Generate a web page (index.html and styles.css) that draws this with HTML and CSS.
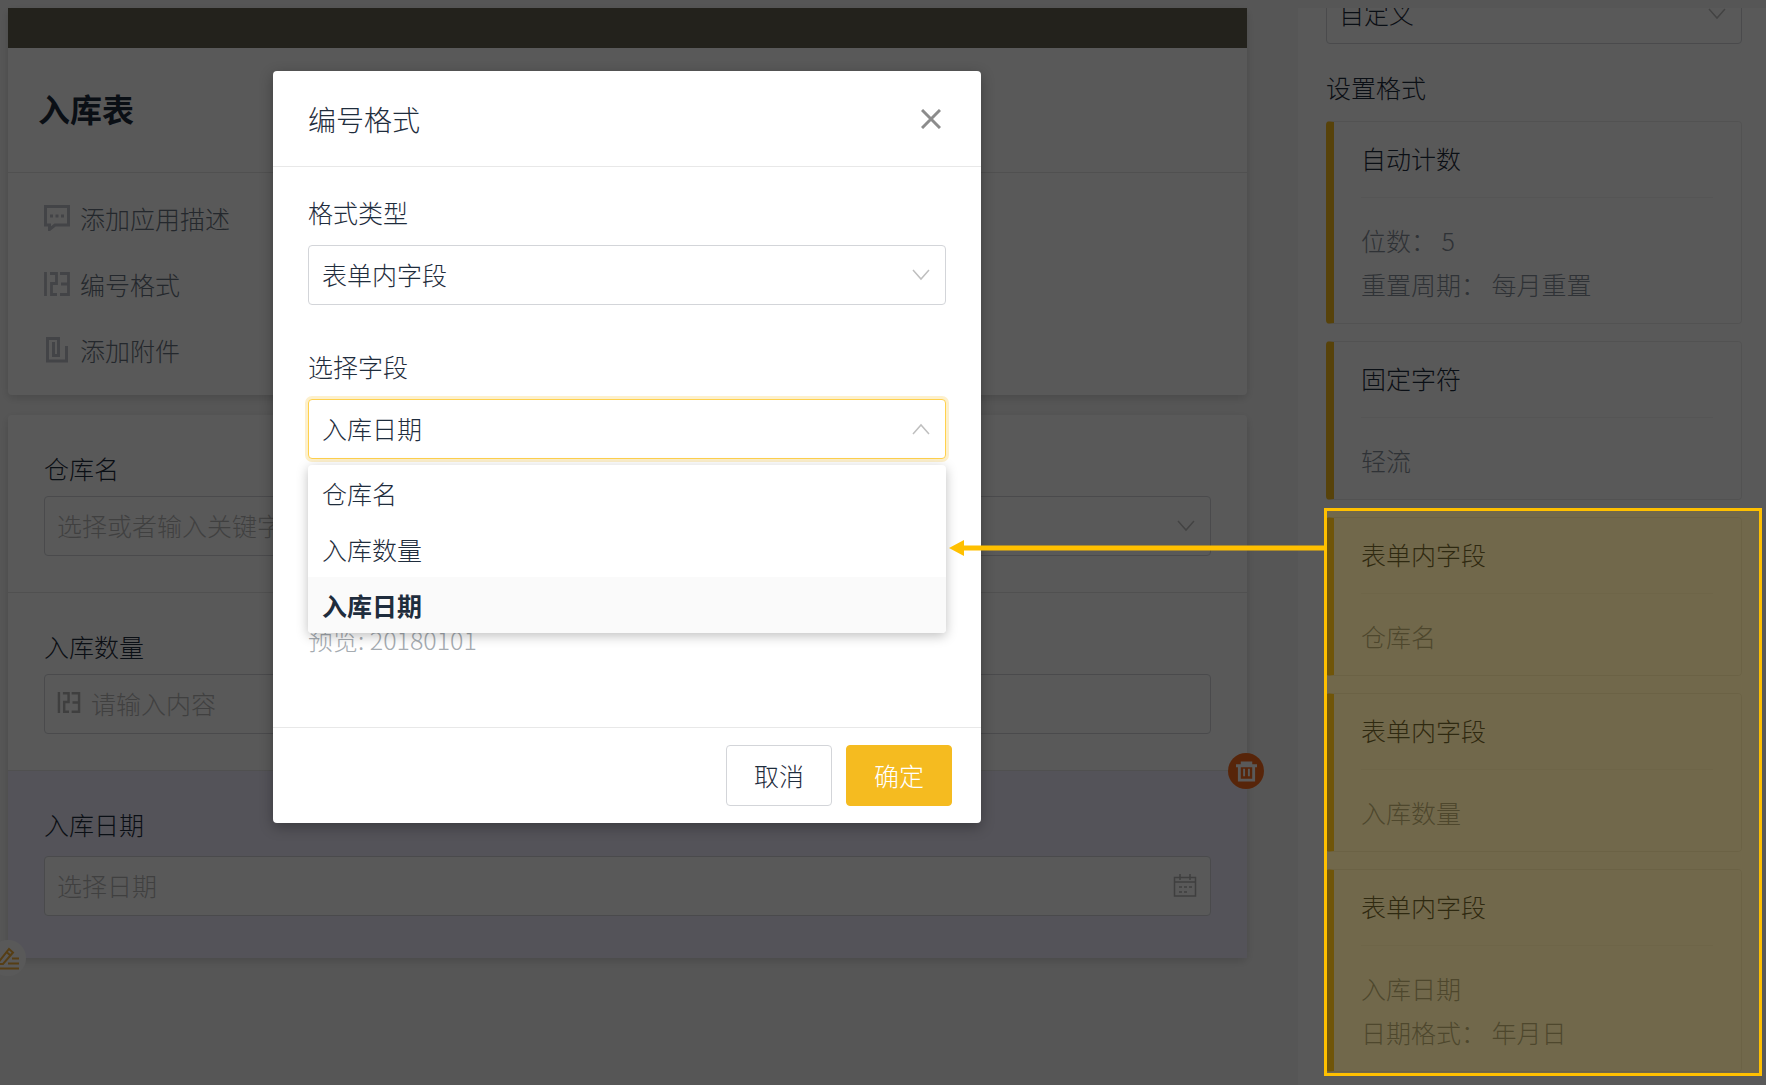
FILE: index.html
```html
<!DOCTYPE html>
<html lang="zh-CN">
<head>
<meta charset="utf-8">
<meta name="viewport" content="width=device-width, initial-scale=1">
<title>入库表 - 编号格式</title>
<link rel="stylesheet" href="styles.css">
</head>
<body>
<svg class="sprite" aria-hidden="true">
  <symbol id="digits" viewBox="0 0 26 24">
    <path d="M1.500 0v24M6 1.500h6.500v10H7.500v11H13M16 1.500h8.500v21H16M17 12h7.500" fill="none" stroke="currentColor" stroke-width="2.800"/>
  </symbol>
  <symbol id="chevron" viewBox="0 0 18 12">
    <path d="M1 1l8 9 8-9" fill="none" stroke="currentColor" stroke-width="1.500"/>
  </symbol>
</svg>

<div class="workspace">
  <main class="canvas">
    <section class="card intro">
      <div class="banner"></div>
      <h1 class="form-title">入库表</h1>
      <ul class="tools">
        <li class="tool">
          <svg class="tool-icon" viewBox="0 0 26 26"><path d="M1.500 1.500h23v18.500H11l-5.500 4.500V20h-4z" fill="none" stroke="currentColor" stroke-width="3"/><path d="M6 11h3M11.500 11h3M17 11h3" stroke="currentColor" stroke-width="3"/></svg>
          <span>添加应用描述</span>
        </li>
        <li class="tool">
          <svg class="tool-icon"><use href="#digits"/></svg>
          <span>编号格式</span>
        </li>
        <li class="tool">
          <svg class="tool-icon" viewBox="0 0 26 26"><path d="M9.500 5v13.500h5V1.500h-11v22.500h19V9" fill="none" stroke="currentColor" stroke-width="3"/></svg>
          <span>添加附件</span>
        </li>
      </ul>
    </section>

    <section class="card fields">
      <div class="field">
        <label class="field-label" for="warehouse">仓库名</label>
        <div class="control">
          <input class="box" id="warehouse" type="text" placeholder="选择或者输入关键字搜索">
          <svg class="chevron"><use href="#chevron"/></svg>
        </div>
      </div>
      <div class="field">
        <label class="field-label" for="amount">入库数量</label>
        <div class="control">
          <svg class="lead-icon"><use href="#digits"/></svg>
          <input class="box with-lead" id="amount" type="text" placeholder="请输入内容">
        </div>
      </div>
      <div class="field active">
        <label class="field-label" for="date">入库日期</label>
        <div class="control">
          <input class="box" id="date" type="text" placeholder="选择日期">
          <svg class="calendar" viewBox="0 0 24 24"><path d="M1.500 3.500h21v18.500h-21zM1.500 8h21M7 0v6M17 0v6" fill="none" stroke="currentColor" stroke-width="1.500"/><path d="M6 13h3M11 13h3M16 13h3M6 18h3M11 18h3" stroke="currentColor" stroke-width="1.500"/></svg>
        </div>
        <button class="round remove" type="button" aria-label="删除">
          <svg viewBox="0 0 22 22"><path d="M0 5h22M6.500 5V2h9v3M3.500 5v15h15V5" fill="none" stroke="currentColor" stroke-width="3"/><path d="M8.500 8v8M13.500 8v8" stroke="currentColor" stroke-width="2"/></svg>
        </button>
        <button class="round edit" type="button" aria-label="编辑">
          <svg viewBox="0 0 24 24"><path d="M2 17L13 3l4 3.500L7 18H2zM10.500 6l4 3.500M16 12.500h7M12 17.500h11M1 22.500h22" fill="none" stroke="currentColor" stroke-width="2"/></svg>
        </button>
      </div>
    </section>
  </main>

  <aside class="sidebar">
    <div class="control scrolled">
      <select class="box" aria-label="编号规则"><option>自定义</option></select>
      <svg class="chevron"><use href="#chevron"/></svg>
    </div>
    <h2 class="side-title">设置格式</h2>
    <div class="rules">
      <article class="rule">
        <h3 class="rule-name">自动计数</h3>
        <p class="rule-body">位数： 5<br>重置周期： 每月重置</p>
      </article>
      <article class="rule">
        <h3 class="rule-name">固定字符</h3>
        <p class="rule-body">轻流</p>
      </article>
      <article class="rule">
        <h3 class="rule-name">表单内字段</h3>
        <p class="rule-body">仓库名</p>
      </article>
      <article class="rule">
        <h3 class="rule-name">表单内字段</h3>
        <p class="rule-body">入库数量</p>
      </article>
      <article class="rule">
        <h3 class="rule-name">表单内字段</h3>
        <p class="rule-body">入库日期<br>日期格式： 年月日</p>
      </article>
    </div>
  </aside>
</div>

<div class="overlay">
  <form class="modal" role="dialog" aria-labelledby="modal-title">
    <header class="modal-head">
      <h2 class="modal-title" id="modal-title">编号格式</h2>
      <button class="close" type="button" aria-label="关闭">
        <svg viewBox="0 0 20 20"><path d="M1 1l18 18M19 1L1 19" fill="none" stroke="currentColor" stroke-width="3"/></svg>
      </button>
    </header>
    <div class="modal-body">
      <div class="group">
        <label class="field-label" for="type">格式类型</label>
        <div class="control">
          <select class="box" id="type"><option>表单内字段</option></select>
          <svg class="chevron"><use href="#chevron"/></svg>
        </div>
      </div>
      <div class="group">
        <label class="field-label" for="source">选择字段</label>
        <div class="control open">
          <select class="box" id="source"><option>入库日期</option></select>
          <svg class="chevron"><use href="#chevron"/></svg>
          <ul class="menu" role="listbox" aria-label="选择字段">
            <li class="option" role="option">仓库名</li>
            <li class="option" role="option">入库数量</li>
            <li class="option selected" role="option" aria-selected="true">入库日期</li>
          </ul>
        </div>
      </div>
      <p class="preview">预览: 20180101</p>
    </div>
    <footer class="modal-foot">
      <button class="btn" type="button">取消</button>
      <button class="btn primary" type="button">确定</button>
    </footer>
  </form>
</div>

<div class="callout">
  <svg class="arrow" viewBox="0 0 378 16"><path d="M0 8L15 0v5.500h363v5H15V16z" fill="currentColor"/></svg>
</div>
</body>
</html>
```
FILE: styles.css
```css
* { box-sizing: border-box; }

body {
  margin: 0;
  position: relative;
  min-height: 100vh;
  overflow: hidden;
  background: #f7f7f7;
  color: #1f2d3d;
  font: 300 25px/36px "Noto Sans CJK SC", sans-serif;
}

h1, h2, h3, p, ul { margin: 0; padding: 0; font-weight: inherit; font-size: inherit; }
ul { list-style: none; }
button, input, select { font: inherit; color: inherit; }
svg { display: block; }
.sprite { position: absolute; width: 0; height: 0; }

/* Page */
.workspace {
  display: flex;
  height: 100vh;
  padding-top: 8px;
}

.canvas {
  flex: 1;
  min-width: 0;
  display: flex;
  flex-direction: column;
  gap: 20px;
  padding: 0 51px 0 8px;
}

.card {
  background: #fff;
  border-radius: 4px;
  box-shadow: 0 3px 10px rgba(0, 0, 0, .15);
}

.banner { height: 40px; background: #646152; }

.form-title {
  padding: 36px 30px 40px;
  border-bottom: 1px solid #e6e6e6;
  font-size: 32px;
  line-height: 48px;
  font-weight: 700;
}

.tools {
  display: flex;
  flex-direction: column;
  gap: 30px;
  padding: 27px 36px;
}

.tool { display: flex; align-items: center; gap: 10px; color: #697380; }
.tool-icon { width: 26px; height: 26px; color: #c0c2ca; }

.field {
  position: relative;
  padding: 35px 36px 36px;
  border-bottom: 1px solid #e6e6e6;
}

.field-label { display: block; margin-bottom: 10px; }

.field.active { padding-bottom: 42px; background: #f0eefe; border: 0; }
.field.active .field-label { margin-bottom: 14px; }

.control { position: relative; }

.box {
  display: block;
  width: 100%;
  height: 60px;
  padding: 0 12px 2px;
  border: 1px solid #d3d5d9;
  border-radius: 4px;
  background: #fff;
  appearance: none;
  outline: 0;
}
.box::placeholder { color: #b8b8b8; opacity: 1; }
.box.with-lead { padding-left: 46px; }

.chevron {
  position: absolute;
  right: 16px;
  top: 24px;
  width: 18px;
  height: 12px;
  color: #bfbfbf;
}
.lead-icon { position: absolute; left: 13px; top: 18px; width: 24px; height: 21px; color: #b4b4b4; }
.calendar { position: absolute; right: 14px; top: 18px; width: 24px; height: 24px; color: #b4b4b4; }

.round {
  position: absolute;
  display: grid;
  place-items: center;
  width: 36px;
  height: 36px;
  padding: 0;
  border: 0;
  border-radius: 50%;
}
.remove { right: -17px; top: -18px; background: #fa6b1e; color: #fff; }
.remove svg { width: 21px; height: 21px; }
.edit { left: -18px; bottom: -18px; background: #fff; color: #f5b23c; }
.edit svg { width: 24px; height: 24px; }

/* Settings column */
.sidebar {
  width: 468px;
  overflow: hidden;
  padding: 0 24px 0 28px;
  background: #fff;
}
.scrolled { margin-top: -24px; }
.side-title { padding: 25px 0 16px; }

.rules { display: flex; flex-direction: column; gap: 17px; }
.rule {
  padding: 18px 28px 17px 27px;
  border: 1px solid #ececec;
  border-left: 8px solid #f9bd1f;
  border-radius: 4px;
}
.rule-name { padding-bottom: 21px; border-bottom: 1px solid #f3f3f3; }
.rule-body { padding-top: 20px; color: #87909a; line-height: 44px; }

/* Dialog */
.overlay {
  position: absolute;
  inset: 0;
  display: flex;
  justify-content: center;
  align-items: flex-start;
  padding: 71px 512px 0 0;
  background: rgba(0, 0, 0, .65);
}

.modal {
  width: 708px;
  background: #fff;
  border-radius: 4px;
  box-shadow: 0 4px 14px rgba(0, 0, 0, .3);
}

.modal-head {
  display: flex;
  justify-content: space-between;
  align-items: center;
  height: 96px;
  padding: 0 40px 0 35px;
  border-bottom: 1px solid #e8e8e8;
}
.modal-title { font-size: 28px; line-height: 40px; }
.close { padding: 0; border: 0; background: none; color: #8c8c8c; }
.close svg { width: 20px; height: 20px; }

.modal-body {
  display: flex;
  flex-direction: column;
  gap: 43px;
  padding: 27px 35px 70px;
}
.modal-body .field-label { margin-bottom: 15px; }
.modal-body .box { padding-left: 13px; }

.open .box { border-color: #ffd14d; box-shadow: 0 0 0 3px #fdf0cc; }
.open .chevron { transform: rotate(180deg); }

.menu {
  position: absolute;
  top: 100%;
  left: 0;
  right: 0;
  margin-top: 6px;
  border-radius: 4px;
  overflow: hidden;
  background: #fff;
  box-shadow: 0 3px 12px rgba(0, 0, 0, .25);
}
.option { padding: 10px 14px; }
.option.selected { background: #fafafa; font-weight: 700; }

.preview { padding-top: 119px; color: #a5abb1; }

.modal-foot {
  display: flex;
  justify-content: flex-end;
  gap: 14px;
  padding: 17px 29px 17px;
  border-top: 1px solid #e8e8e8;
}
.btn {
  width: 106px;
  height: 61px;
  padding: 0 0 2px;
  border: 1px solid #d3d5d9;
  border-radius: 4px;
  background: #fff;
}
.btn.primary { border-color: #f5bb20; background: #f5bb20; color: #fff; }

/* Callout drawn over the page */
.callout {
  position: absolute;
  top: 508px;
  right: 4px;
  width: 438px;
  height: 568px;
  border: 3px solid #ffc000;
  background: rgba(255, 192, 0, .15);
}
.arrow {
  position: absolute;
  right: 100%;
  top: 29px;
  width: 378px;
  height: 16px;
  color: #ffc000;
}
```
